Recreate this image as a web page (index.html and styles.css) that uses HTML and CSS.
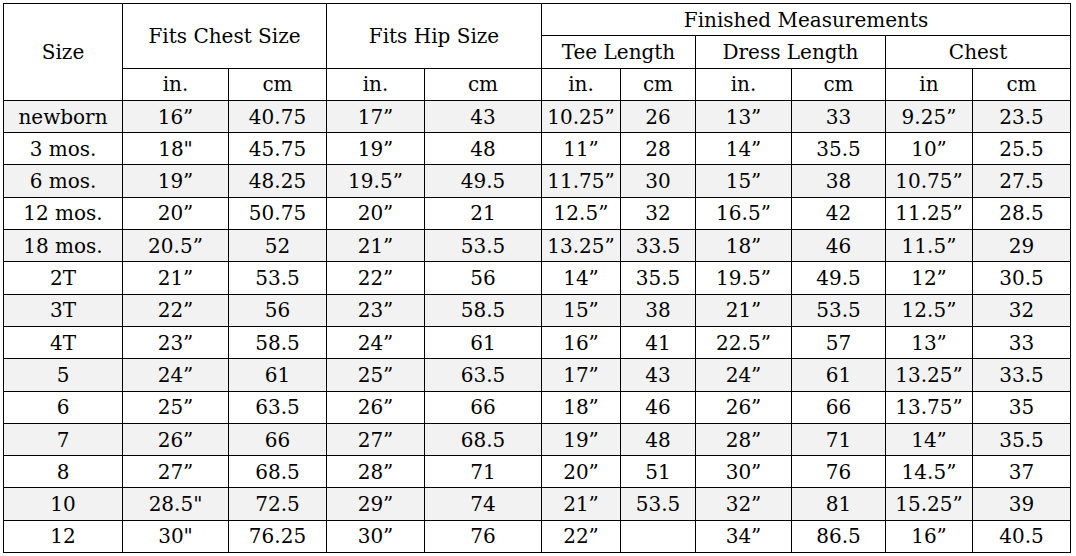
FILE: index.html
```html
<!DOCTYPE html>
<html>
<head>
<meta charset="utf-8">
<link rel="stylesheet" href="styles.css">
</head>
<body>
<table class="size-table">
  <colgroup>
    <col class="c-size">
    <col class="c-a"><col class="c-b">
    <col class="c-c"><col class="c-d">
    <col class="c-e"><col class="c-f">
    <col class="c-g"><col class="c-h">
    <col class="c-i"><col class="c-j">
  </colgroup>
  <thead>
    <tr>
      <th rowspan="3">Size</th>
      <th colspan="2" rowspan="2">Fits Chest Size</th>
      <th colspan="2" rowspan="2">Fits Hip Size</th>
      <th colspan="6">Finished Measurements</th>
    </tr>
    <tr>
      <th colspan="2">Tee Length</th>
      <th colspan="2">Dress Length</th>
      <th colspan="2">Chest</th>
    </tr>
    <tr>
      <th>in.</th><th>cm</th>
      <th>in.</th><th>cm</th>
      <th>in.</th><th>cm</th>
      <th>in.</th><th>cm</th>
      <th>in</th><th>cm</th>
    </tr>
  </thead>
  <tbody>
    <tr><td>newborn</td><td>16”</td><td>40.75</td><td>17”</td><td>43</td><td>10.25”</td><td>26</td><td>13”</td><td>33</td><td>9.25”</td><td>23.5</td></tr>
    <tr><td>3 mos.</td><td>18"</td><td>45.75</td><td>19”</td><td>48</td><td>11”</td><td>28</td><td>14”</td><td>35.5</td><td>10”</td><td>25.5</td></tr>
    <tr><td>6 mos.</td><td>19”</td><td>48.25</td><td>19.5”</td><td>49.5</td><td>11.75”</td><td>30</td><td>15”</td><td>38</td><td>10.75”</td><td>27.5</td></tr>
    <tr><td>12 mos.</td><td>20”</td><td>50.75</td><td>20”</td><td>21</td><td>12.5”</td><td>32</td><td>16.5”</td><td>42</td><td>11.25”</td><td>28.5</td></tr>
    <tr><td>18 mos.</td><td>20.5”</td><td>52</td><td>21”</td><td>53.5</td><td>13.25”</td><td>33.5</td><td>18”</td><td>46</td><td>11.5”</td><td>29</td></tr>
    <tr><td>2T</td><td>21”</td><td>53.5</td><td>22”</td><td>56</td><td>14”</td><td>35.5</td><td>19.5”</td><td>49.5</td><td>12”</td><td>30.5</td></tr>
    <tr><td>3T</td><td>22”</td><td>56</td><td>23”</td><td>58.5</td><td>15”</td><td>38</td><td>21”</td><td>53.5</td><td>12.5”</td><td>32</td></tr>
    <tr><td>4T</td><td>23”</td><td>58.5</td><td>24”</td><td>61</td><td>16”</td><td>41</td><td>22.5”</td><td>57</td><td>13”</td><td>33</td></tr>
    <tr><td>5</td><td>24”</td><td>61</td><td>25”</td><td>63.5</td><td>17”</td><td>43</td><td>24”</td><td>61</td><td>13.25”</td><td>33.5</td></tr>
    <tr><td>6</td><td>25”</td><td>63.5</td><td>26”</td><td>66</td><td>18”</td><td>46</td><td>26”</td><td>66</td><td>13.75”</td><td>35</td></tr>
    <tr><td>7</td><td>26”</td><td>66</td><td>27”</td><td>68.5</td><td>19”</td><td>48</td><td>28”</td><td>71</td><td>14”</td><td>35.5</td></tr>
    <tr><td>8</td><td>27”</td><td>68.5</td><td>28”</td><td>71</td><td>20”</td><td>51</td><td>30”</td><td>76</td><td>14.5”</td><td>37</td></tr>
    <tr><td>10</td><td>28.5"</td><td>72.5</td><td>29”</td><td>74</td><td>21”</td><td>53.5</td><td>32”</td><td>81</td><td>15.25”</td><td>39</td></tr>
    <tr><td>12</td><td>30"</td><td>76.25</td><td>30”</td><td>76</td><td>22”</td><td></td><td>34”</td><td>86.5</td><td>16”</td><td>40.5</td></tr>
  </tbody>
</table>
</body>
</html>
```
FILE: styles.css
```css
html, body {
  margin: 0;
  padding: 0;
  background: #ffffff;
}
body {
  padding: 3px;
}
.size-table {
  border-collapse: collapse;
  table-layout: fixed;
  width: 1068px;
  font-family: "DejaVu Serif", "Liberation Serif", serif;
  font-size: 20px;
  color: #000;
}
.size-table th,
.size-table td {
  border: 1px solid #000;
  padding: 0;
  text-align: center;
  vertical-align: middle;
  font-weight: normal;
  line-height: 24px;
  height: 31.3px;
}
.size-table tbody tr:nth-child(odd) td {
  background: #f2f2f2;
}
.c-size { width: 119px; }
.c-a { width: 106px; }
.c-b { width: 98px; }
.c-c { width: 98px; }
.c-d { width: 117px; }
.c-e { width: 79px; }
.c-f { width: 75px; }
.c-g { width: 96px; }
.c-h { width: 94px; }
.c-i { width: 87px; }
.c-j { width: 98px; }
```
